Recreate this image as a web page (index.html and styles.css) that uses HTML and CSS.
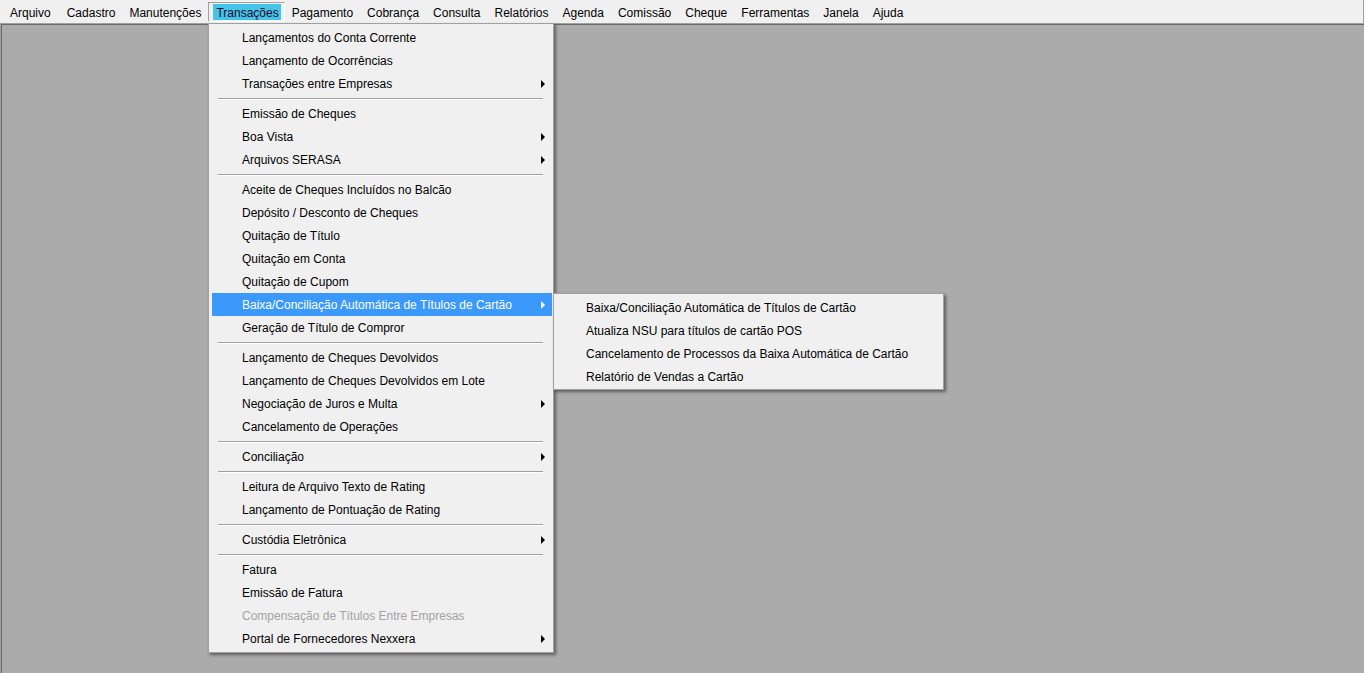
FILE: index.html
```html
<!DOCTYPE html>
<html lang="pt-BR">
<head>
  <meta charset="UTF-8" />
  <title>Transações</title>
  <link rel="stylesheet" href="styles.css">
</head>
<body>
  <div class="app">
    <!-- barra de menus -->
    <div class="menubar">
      <span class="top first">Arquivo</span>
      <span class="top">Cadastro</span>
      <span class="top">Manutenções</span>
      <span class="top open"><span class="hl">Transações</span></span>
      <span class="top">Pagamento</span>
      <span class="top">Cobrança</span>
      <span class="top">Consulta</span>
      <span class="top">Relatórios</span>
      <span class="top">Agenda</span>
      <span class="top">Comissão</span>
      <span class="top">Cheque</span>
      <span class="top">Ferramentas</span>
      <span class="top">Janela</span>
      <span class="top">Ajuda</span>
    </div>

    <div class="workspace"></div>

    <!-- menu Transações -->
    <div class="dropdown main">
      <div class="item">Lançamentos do Conta Corrente</div>
      <div class="item">Lançamento de Ocorrências</div>
      <div class="item sub">Transações entre Empresas</div>
      <div class="sep"></div>
      <div class="item">Emissão de Cheques</div>
      <div class="item sub">Boa Vista</div>
      <div class="item sub">Arquivos SERASA</div>
      <div class="sep"></div>
      <div class="item">Aceite de Cheques Incluídos no Balcão</div>
      <div class="item">Depósito / Desconto de Cheques</div>
      <div class="item">Quitação de Título</div>
      <div class="item">Quitação em Conta</div>
      <div class="item">Quitação de Cupom</div>
      <div class="item sub active">Baixa/Conciliação Automática de Títulos de Cartão</div>
      <div class="item">Geração de Título de Compror</div>
      <div class="sep"></div>
      <div class="item">Lançamento de Cheques Devolvidos</div>
      <div class="item">Lançamento de Cheques Devolvidos em Lote</div>
      <div class="item sub">Negociação de Juros e Multa</div>
      <div class="item">Cancelamento de Operações</div>
      <div class="sep"></div>
      <div class="item sub">Conciliação</div>
      <div class="sep"></div>
      <div class="item">Leitura de Arquivo Texto de Rating</div>
      <div class="item">Lançamento de Pontuação de Rating</div>
      <div class="sep"></div>
      <div class="item sub">Custódia Eletrônica</div>
      <div class="sep"></div>
      <div class="item">Fatura</div>
      <div class="item">Emissão de Fatura</div>
      <div class="item disabled">Compensação de Títulos Entre Empresas</div>
      <div class="item sub">Portal de Fornecedores Nexxera</div>
    </div>

    <!-- submenu Baixa/Conciliação -->
    <div class="dropdown submenu">
      <div class="item">Baixa/Conciliação Automática de Títulos de Cartão</div>
      <div class="item">Atualiza NSU para títulos de cartão POS</div>
      <div class="item">Cancelamento de Processos da Baixa Automática de Cartão</div>
      <div class="item">Relatório de Vendas a Cartão</div>
    </div>
  </div>
</body>
</html>
```

FILE: styles.css
```css
html, body { margin: 0; padding: 0; }
body { background: #fff; font-family: "Liberation Sans", Arial, sans-serif; font-size: 12px; color: #000; overflow: hidden; }

.app { position: relative; width: 1364px; height: 673px; }

.menubar { display: flex; height: 23px; box-sizing: border-box; padding: 2px 0 0 3px; background: #f0f0f0; border-right: 1px solid #a0a0a0; }
.top { display: block; height: 20px; line-height: 22px; padding: 0 7px; white-space: nowrap; box-sizing: border-box; }
.top.first { padding-right: 9px; }
.top.open { padding: 0 3px 0 4px; line-height: 18px; border: 1px solid; border-color: #a0a0a0 #fff #fff #a0a0a0; }
.top.open .hl { display: block; margin-top: 1px; height: 16px; line-height: 18px; padding: 0 2px 0 3px; background: #45c3ea; color: #1a0a24; }

.workspace { height: 650px; box-sizing: border-box; background: #ababab; border-top: 1px solid #a0a0a0; border-left: 1px solid #a0a0a0; box-shadow: inset 1px 1px 0 #696969; }

.dropdown { position: absolute; background: #f0f0f0; border: 1px solid #a0a0a0; box-shadow: 2px 2px 3px rgba(0,0,0,0.45); }
.dropdown.main { left: 208px; top: 23px; width: 340px; padding: 2px 1px 2px 3px; }
.dropdown.submenu { left: 553px; top: 293px; width: 385px; padding: 2px 1px 1px 3px; }

.item { position: relative; height: 23px; line-height: 25px; padding-left: 30px; white-space: nowrap; }
.submenu .item { padding-left: 29px; }
.item.sub::after { content: ""; position: absolute; right: 7px; top: 8px; border-style: solid; border-width: 4px 0 4px 4px; border-color: transparent transparent transparent #000; }
.item.active { background: #3b99fc; color: #fff; }
.item.active::after { border-left-color: #fff; }
.item.disabled { color: #a3a3a3; }

.sep { margin: 3px 9px 2px 6px; border-top: 1px solid #a0a0a0; border-bottom: 1px solid #fff; }
```
